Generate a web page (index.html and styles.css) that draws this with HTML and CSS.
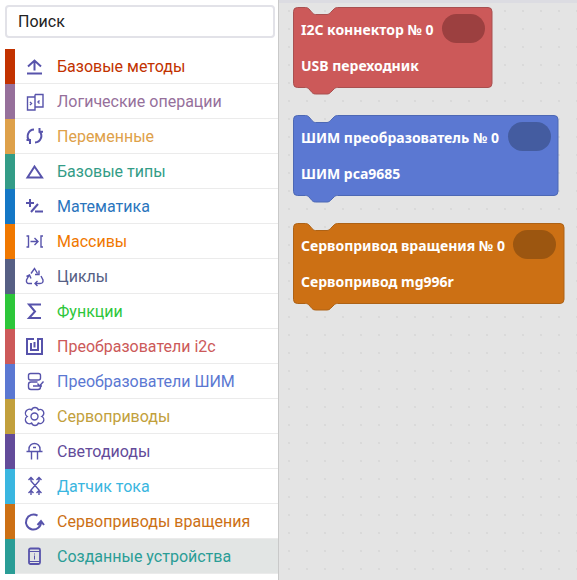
FILE: index.html
```html
<!DOCTYPE html>
<html lang="ru">
<head>
    <meta charset="UTF-8">
    <meta name="viewport" content="width=device-width, initial-scale=1.0">
    <title>Блоки</title>
    <link rel="stylesheet" href="styles.css">
</head>
<body>
    <div class="app">
        <!-- Панель категорий -->
        <aside class="sidebar">
            <div class="search">
                <input class="search-input" type="text" value="Поиск">
            </div>
            <ul class="categories">
                <li class="cat cat-methods">
                    <span class="cat-bar"></span>
                    <div class="cat-body">
                        <svg class="cat-icon" viewBox="0 0 20 20"><path d="M4 10.500 10.500 4.500 17 10.500M10.500 4.500V14.500M3 17.500H18"/></svg>
                        <span>Базовые методы</span>
                    </div>
                </li>
                <li class="cat cat-logic">
                    <span class="cat-bar"></span>
                    <div class="cat-body">
                        <svg class="cat-icon thin" viewBox="0 0 20 20"><path d="M3.500 6H11V19H3.500ZM11 3.500H19V16H11M11 3.500V16M6 11 7.500 12.500 6 14M15.500 9.500 14 11 15.500 12.500"/></svg>
                        <span>Логические операции</span>
                    </div>
                </li>
                <li class="cat cat-vars">
                    <span class="cat-bar"></span>
                    <div class="cat-body">
                        <svg class="cat-icon" viewBox="0 0 20 20"><path d="M10 3.500A6.500 6.500 0 0 0 5.500 14.500M11 16.500A6.500 6.500 0 0 0 15.500 5.500M2.500 14H6V18M15.500 2V5.800H19"/></svg>
                        <span>Переменные</span>
                    </div>
                </li>
                <li class="cat cat-types">
                    <span class="cat-bar"></span>
                    <div class="cat-body">
                        <svg class="cat-icon" viewBox="0 0 20 20"><path d="M10.500 5.500 3.500 16.500H18Z"/></svg>
                        <span>Базовые типы</span>
                    </div>
                </li>
                <li class="cat cat-math">
                    <span class="cat-bar"></span>
                    <div class="cat-body">
                        <svg class="cat-icon" viewBox="0 0 20 20"><path d="M6 3V11M2 7H10M7 16 14 8M11 15.500H19"/></svg>
                        <span>Математика</span>
                    </div>
                </li>
                <li class="cat cat-arrays">
                    <span class="cat-bar"></span>
                    <div class="cat-body">
                        <svg class="cat-icon thin" viewBox="0 0 20 20"><path d="M2.500 5H4.500V16H2.500M19 5H17V16H19M6.500 10.500H14M10.500 7 14 10.500 10.500 14"/></svg>
                        <span>Массивы</span>
                    </div>
                </li>
                <li class="cat cat-loops">
                    <span class="cat-bar"></span>
                    <div class="cat-body">
                        <svg class="cat-icon thin" viewBox="0 0 20 20"><path d="M7 7.500 10.500 2.500 13.500 7.500M15 4.500V8.500H11M5 9.500 2.500 14Q2 17.500 5 17.500H8M2.500 10.500 5.500 9 7 12.500M17 10 19 14Q19.500 17.500 16 17.500H11M13.500 15 11 17.500 13.500 20"/></svg>
                        <span>Циклы</span>
                    </div>
                </li>
                <li class="cat cat-funcs">
                    <span class="cat-bar"></span>
                    <div class="cat-body">
                        <svg class="cat-icon" viewBox="0 0 20 20"><path d="M17 3.500H5L11 10.500 5 17H17"/></svg>
                        <span>Функции</span>
                    </div>
                </li>
                <li class="cat cat-i2c">
                    <span class="cat-bar"></span>
                    <div class="cat-body">
                        <svg class="cat-icon" viewBox="0 0 20 20"><path d="M10 3H3V18H18V3H14V14H7V7"/><path d="M10.500 6V11.500"/></svg>
                        <span>Преобразователи i2c</span>
                    </div>
                </li>
                <li class="cat cat-pwm">
                    <span class="cat-bar"></span>
                    <div class="cat-body">
                        <svg class="cat-icon thin" viewBox="0 0 20 20"><rect x="4.500" y="2.500" width="12" height="6.500" rx="2"/><path d="M13.500 11H7A2.500 2.500 0 0 0 4.500 13.500V16A2.500 2.500 0 0 0 7 18.500H14A2.500 2.500 0 0 0 16.500 16V14.500M9 15H15M19.500 10.500 15.500 15M13.500 12.500 15.500 15 18 15"/></svg>
                        <span>Преобразователи ШИМ</span>
                    </div>
                </li>
                <li class="cat cat-servo">
                    <span class="cat-bar"></span>
                    <div class="cat-body">
                        <svg class="cat-icon thin" viewBox="0 0 20 20"><path d="M17.800 10.500A3.600 3.600 0 0 1 14.400 17.100A3.600 3.600 0 0 1 7.600 17.100A3.600 3.600 0 0 1 3.200 10.500A3.600 3.600 0 0 1 7.600 3.900A3.600 3.600 0 0 1 14.400 3.900A3.600 3.600 0 0 1 17.800 10.500Z"/><circle cx="10.500" cy="10.500" r="3.500"/></svg>
                        <span>Сервоприводы</span>
                    </div>
                </li>
                <li class="cat cat-leds">
                    <span class="cat-bar"></span>
                    <div class="cat-body">
                        <svg class="cat-icon thin" viewBox="0 0 20 20"><path d="M5 10V8A5.500 5.500 0 0 1 16 8V10M2.500 10.500H18.500M7.500 10.500V18.500M13.500 10.500V18.500M9 6.500H12"/></svg>
                        <span>Светодиоды</span>
                    </div>
                </li>
                <li class="cat cat-current">
                    <span class="cat-bar"></span>
                    <div class="cat-body">
                        <svg class="cat-icon thin" viewBox="0 0 20 20"><path d="M7 1V5L15 14V19M15 1V5L7 14V19M4.500 4 7 1.500 9.500 4M12.500 4 15 1.500 17.500 4M4.500 17 7 14.500 9.500 17M12.500 17 15 14.500 17.500 17"/></svg>
                        <span>Датчик тока</span>
                    </div>
                </li>
                <li class="cat cat-rotation">
                    <span class="cat-bar"></span>
                    <div class="cat-body">
                        <svg class="cat-icon" viewBox="0 0 20 20"><path d="M13.500 4.700A7.500 7.500 0 1 0 17 11M13.500 14 17 10 20 14"/></svg>
                        <span>Сервоприводы вращения</span>
                    </div>
                </li>
                <li class="cat cat-devices active">
                    <span class="cat-bar"></span>
                    <div class="cat-body">
                        <svg class="cat-icon thick" viewBox="0 0 20 20"><rect x="5" y="2.500" width="11" height="15.500" rx="1.500"/><path class="icon-detail" d="M5 5.500H16M5 15.500H16M10.500 7.500V8.500M10.500 9.500V13.500"/></svg>
                        <span>Созданные устройства</span>
                    </div>
                </li>
            </ul>
        </aside>

        <!-- Рабочая область с блоками -->
        <main class="workspace">
            <svg class="block block-i2c" width="202" height="90" viewBox="0 0 202 90">
                <path class="block-shape" d="M.5 4.500A4 4 0 0 1 4.500 .5H12.500C14 .5 15 1 16 2L19 5.500C20 6.500 21 7.500 22.500 7.500H34C35.500 7.500 36.500 6.500 37.500 5.500L41 2C42 1 43 .5 44.500 .5H195A4 4 0 0 1 199 4.500V76.500A4 4 0 0 1 195 80.500H44.500C43 80.500 42 81 41 82L37.500 85.500C36.500 86.500 35.500 87 34 87H22.500C21 87 20 86.500 19 85.500L16 82C15 81 14 80.500 12.500 80.500H4.500A4 4 0 0 1 .5 76.500Z"/>
                <text class="block-text" x="8" y="28">I2C коннектор № 0</text>
                <rect class="block-field" x="149" y="7" width="43" height="29" rx="14.500"/>
                <text class="block-text" x="8" y="64">USB переходник</text>
            </svg>
            <svg class="block block-pwm" width="268" height="90" viewBox="0 0 268 90">
                <path class="block-shape" d="M.5 4.500A4 4 0 0 1 4.500 .5H12.500C14 .5 15 1 16 2L19 5.500C20 6.500 21 7.500 22.500 7.500H34C35.500 7.500 36.500 6.500 37.500 5.500L41 2C42 1 43 .5 44.500 .5H261A4 4 0 0 1 265 4.500V76.500A4 4 0 0 1 261 80.500H44.500C43 80.500 42 81 41 82L37.500 85.500C36.500 86.500 35.500 87 34 87H22.500C21 87 20 86.500 19 85.500L16 82C15 81 14 80.500 12.500 80.500H4.500A4 4 0 0 1 .5 76.500Z"/>
                <text class="block-text" x="8" y="28">ШИМ преобразователь № 0</text>
                <rect class="block-field" x="215" y="7" width="43" height="29" rx="14.500"/>
                <text class="block-text" x="8" y="64">ШИМ pca9685</text>
            </svg>
            <svg class="block block-rotation" width="274" height="90" viewBox="0 0 274 90">
                <path class="block-shape" d="M.5 4.500A4 4 0 0 1 4.500 .5H12.500C14 .5 15 1 16 2L19 5.500C20 6.500 21 7.500 22.500 7.500H34C35.500 7.500 36.500 6.500 37.500 5.500L41 2C42 1 43 .5 44.500 .5H267A4 4 0 0 1 271 4.500V76.500A4 4 0 0 1 267 80.500H44.500C43 80.500 42 81 41 82L37.500 85.500C36.500 86.500 35.500 87 34 87H22.500C21 87 20 86.500 19 85.500L16 82C15 81 14 80.500 12.500 80.500H4.500A4 4 0 0 1 .5 76.500Z"/>
                <text class="block-text" x="8" y="28">Сервопривод вращения № 0</text>
                <rect class="block-field" x="220" y="7" width="43" height="29" rx="14.500"/>
                <text class="block-text" x="8" y="64">Сервопривод mg996r</text>
            </svg>
        </main>
    </div>
</body>
</html>
```

FILE: styles.css
```css
* {
    box-sizing: border-box;
    margin: 0;
    padding: 0;
}

html,
body {
    height: 100%;
    overflow: hidden;
}

body {
    background: white;
    font-family: Roboto, 'Liberation Sans', sans-serif;
}

.app {
    display: flex;
    height: 580px;
}

/* Панель категорий */
.sidebar {
    width: 279px;
    flex-shrink: 0;
    background: white;
    border-right: 1px solid #c9c9c9;
}

.search {
    padding: 5px 3px 11px 5px;
}

.search-input {
    display: block;
    width: 270px;
    height: 33px;
    padding: 0 11px;
    border: 2px solid #e2e2e8;
    border-radius: 4px;
    background: white;
    color: #222;
    font-family: inherit;
    font-size: 16px;
}

.categories {
    list-style: none;
    padding-left: 5px;
}

.cat {
    display: flex;
    height: 35px;
    font-size: 16px;
}

.cat-bar {
    width: 10px;
    background: currentColor;
}

.cat-body {
    flex: 1;
    display: flex;
    align-items: center;
    gap: 13px;
    padding-left: 9px;
    border-bottom: 1px solid #ebebeb;
}

.cat.active .cat-body {
    background: #e2e5e4;
}

.cat-icon {
    width: 20px;
    height: 20px;
    overflow: visible;
    fill: none;
    stroke: #5753ab;
    stroke-width: 2;
}

.cat-icon.thin {
    stroke-width: 1.4;
}

.cat-icon.thick rect {
    stroke-width: 1.8;
}

.icon-detail {
    stroke-width: 1;
}

.cat-methods { color: #c23200; }
.cat-logic { color: #96709b; }
.cat-vars { color: #dea14a; }
.cat-types { color: #339c87; }
.cat-math { color: #2a75bd; }
.cat-arrays { color: #f07800; }
.cat-loops { color: #565f84; }
.cat-funcs { color: #2dc63a; }
.cat-i2c { color: #cc5959; }
.cat-pwm { color: #5b78d2; }
.cat-servo { color: #c2a03c; }
.cat-leds { color: #634b9a; }
.cat-current { color: #3ab6e0; }
.cat-rotation { color: #cc7014; }
.cat-devices { color: #2a9d96; }

.cat-math .cat-bar { background: #1477c5; }

/* Рабочая область */
.workspace {
    position: relative;
    flex: 1;
    border-top: 3px solid #dcdce2;
    background-color: #e4e4e4;
    background-image: radial-gradient(circle, #d6d6d6 .6px, transparent 1px);
    background-size: 18px 18px;
    background-position: 1px -1px;
}

.block {
    position: absolute;
    left: 14px;
}

.block-i2c { top: 4px; }
.block-pwm { top: 112px; }
.block-rotation { top: 220px; }

.block-shape {
    stroke-width: 1;
}

.block-i2c .block-shape { fill: #cc5959; stroke: #a85050; }
.block-i2c .block-field { fill: #9c4040; }
.block-pwm .block-shape { fill: #5b78d2; stroke: #4d68b4; }
.block-pwm .block-field { fill: #445ca0; }
.block-rotation .block-shape { fill: #cc7014; stroke: #ad6216; }
.block-rotation .block-field { fill: #9c5610; }

.block-text {
    fill: white;
    font-family: 'Noto Sans', 'Open Sans', sans-serif;
    font-size: 14px;
    font-weight: 700;
}
```
